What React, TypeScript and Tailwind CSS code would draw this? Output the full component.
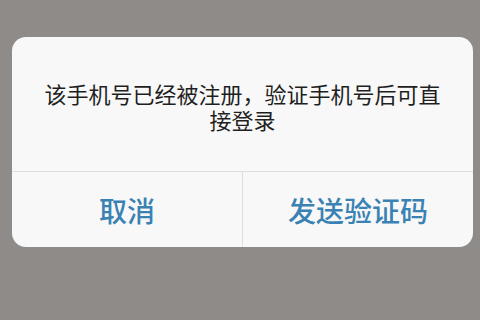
export default function App() {
  return (
    <div
      className="w-[480px] h-[320px] bg-[#8e8b88] pt-[37px] px-[12px] overflow-hidden"
      style={{ fontFamily: '"Noto Sans CJK SC", "Noto Sans", sans-serif' }}
    >
      <div className="w-[461px] h-[210px] bg-[#f8f8f8] rounded-[14px] flex flex-col overflow-hidden">
        <div className="h-[135px] px-[30px] pt-[43px] text-center text-[22px] leading-[26px] text-[#1f1f1f] border-b border-[#dedede]">
          该手机号已经被注册，验证手机号后可直接登录
        </div>
        <div className="flex-1 flex">
          <button className="w-[231px] flex items-center justify-center text-[28px] font-medium text-[#3a82b3] border-r border-[#dedede]">
            取消
          </button>
          <button className="flex-1 flex items-center justify-center text-[28px] font-medium text-[#3a82b3]">
            发送验证码
          </button>
        </div>
      </div>
    </div>
  )
}
